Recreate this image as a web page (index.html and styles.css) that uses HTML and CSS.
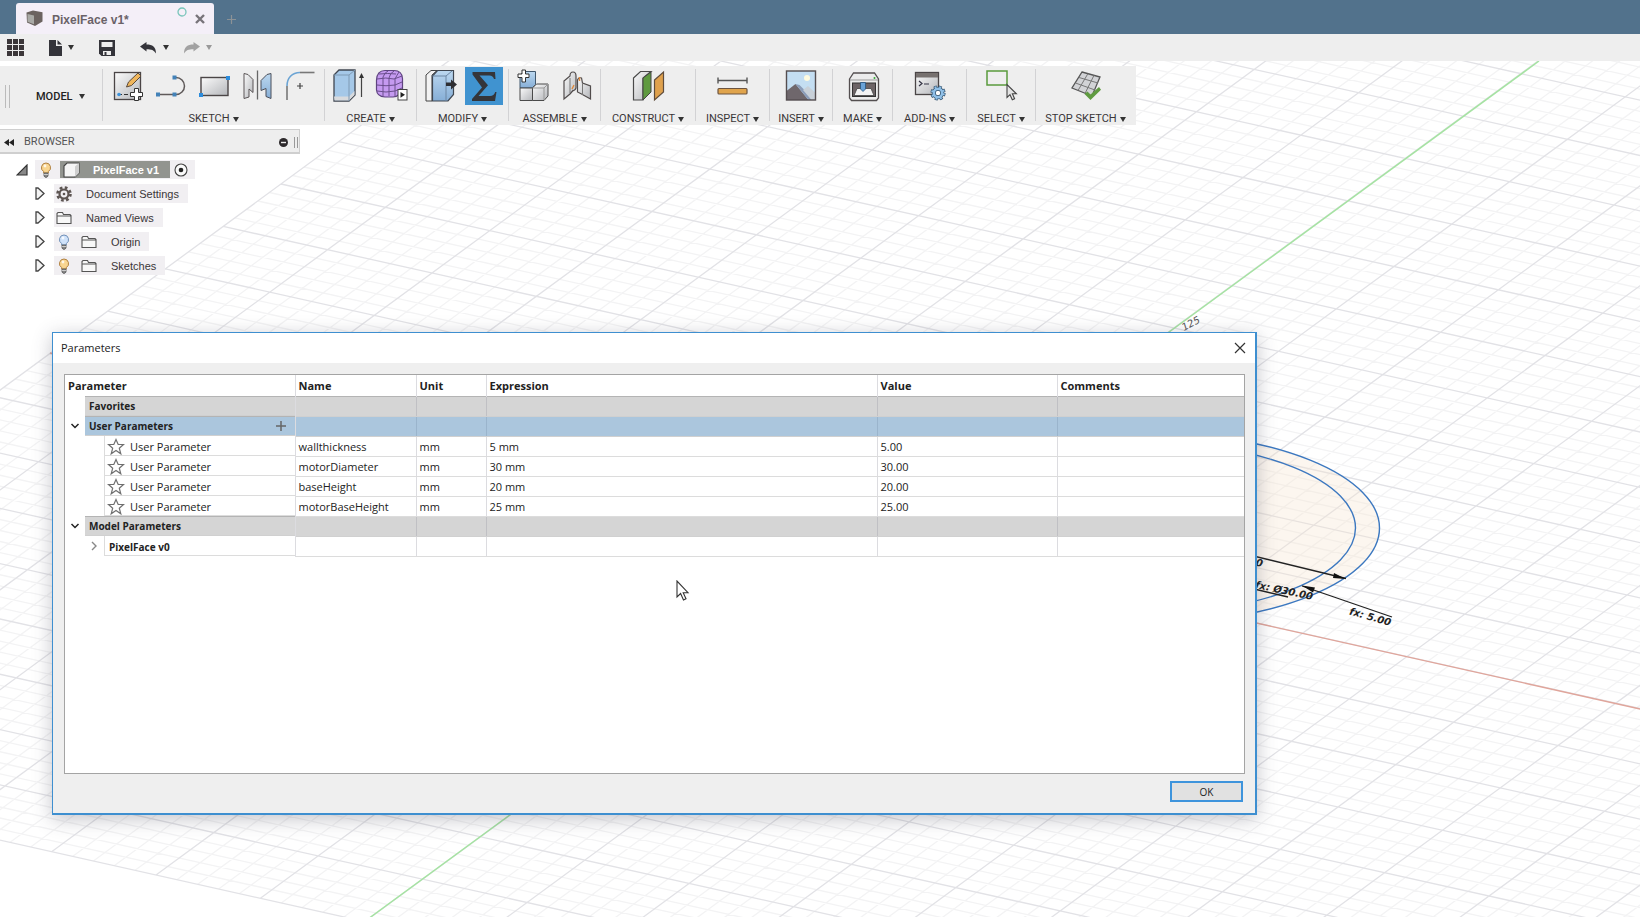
FILE: index.html
```html
<!DOCTYPE html>
<html lang="en">
<head>
<meta charset="utf-8">
<title>PixelFace v1*</title>
<link rel="stylesheet" href="styles.css">
</head>
<body>
<svg class="defs" width="0" height="0" aria-hidden="true">
  <defs>
    <linearGradient id="steel" x1="0" y1="0" x2="1" y2="1"><stop offset="0" stop-color="#fbfbfb"/><stop offset="1" stop-color="#b4b6ba"/></linearGradient>
    <linearGradient id="sky" x1="0" y1="0" x2="0" y2="1"><stop offset="0" stop-color="#bcd8f0"/><stop offset="1" stop-color="#86aed6"/></linearGradient>
    <symbol id="bulb" viewBox="0 0 12 16"><path d="M6 1a4.6 4.6 0 0 0-2.4 8.500V11h4.800V9.500A4.600 4.600 0 0 0 6 1z" stroke="currentColor"/><path d="M4 11h4v3l-1 1.200H5L4 14z" fill="#888" stroke="#555" stroke-width=".8"/><path d="M4 12.500h4" stroke="#ddd" stroke-width=".8"/><circle cx="5" cy="4" r="1.400" fill="#fff" opacity=".8"/></symbol>
    <symbol id="folder" viewBox="0 0 16 14"><path d="M1 12.500v-10l1-1h4.500l1 2H14l1 1v8z M1 5h14" fill="#f8f8f8" stroke="#555" stroke-width="1.100"/></symbol>
    <symbol id="closed" viewBox="0 0 10 13"><path d="M1 1h2l6 5.500-6 5.500H1z" fill="#f4f4f4" stroke="#444" stroke-width="1.300"/></symbol>
    <symbol id="star" viewBox="0 0 18 18"><path d="M9 1.500l2.200 5h5.300l-4.200 3.700 1.500 5.600L9 12.500l-4.800 3.300 1.500-5.600L1.500 6.500h5.300z" fill="#fff" stroke="#707070" stroke-width="1.200"/></symbol>
    <symbol id="chev" viewBox="0 0 10 10"><path d="M1.500 3L5 6.500 8.500 3" fill="none" stroke="#222" stroke-width="1.500"/></symbol>
  </defs>
</svg>

<header class="titlebar">
  <div class="tab">
    <svg class="tab-cube" width="17" height="17" viewBox="0 0 17 17"><path d="M.5 2.500L7 .500l9.500 1.800v9.200L9 16 1 12.500z" fill="#6b6360"/><path d="M1.500 4l6.500 1.500v8.800l-6.500-2.600z" fill="#a9aaa6"/></svg>
    <span class="tab-name">PixelFace v1*</span>
    <svg class="tab-ring" width="10" height="10" viewBox="0 0 10 10"><circle cx="5" cy="5" r="4" fill="none" stroke="#79c5bb" stroke-width="1.300"/></svg>
    <button class="tab-close" aria-label="Close tab"><svg width="10" height="10" viewBox="0 0 10 10"><path d="M1 1l8 8M9 1L1 9" stroke="#77747a" stroke-width="2.400"/></svg></button>
  </div>
  <button class="tab-add" aria-label="New tab"><svg width="9" height="9" viewBox="0 0 9 9"><path d="M4.500 0v9M0 4.500h9" stroke="#8c9296" stroke-width="1.200"/></svg></button>
</header>

<nav class="quick" aria-label="Quick access">
  <button aria-label="Data panel"><svg width="17" height="17" viewBox="0 0 17 17" fill="#3b3639"><path d="M0 0h5v5H0zM6 0h5v5H6zM12 0h5v5h-5zM0 6h5v5H0zM6 6h5v5H6zM12 6h5v5h-5zM0 12h5v5H0zM6 12h5v5H6zM12 12h5v5h-5z"/></svg></button>
  <button class="quick-file" aria-label="File"><svg width="13" height="16" viewBox="0 0 13 16"><path d="M0 0h7v6h6v10H0zM8.500 0L13 4.600H8.500z" fill="#34343a"/></svg><i class="caret"></i></button>
  <button class="quick-save" aria-label="Save"><svg width="16" height="16" viewBox="0 0 16 16"><path d="M0 0h16v16H2.500L0 13.500z" fill="#34343a"/><path d="M2.500 2h11v5h-11zM4 11h8v4H4z" fill="#eee"/><path d="M5.500 12h2v3h-2z" fill="#34343a"/></svg></button>
  <button class="quick-undo" aria-label="Undo"><svg width="17" height="12" viewBox="0 0 17 12"><path d="M0 4.500L6.500 0v2.600c6 0 9.500 2.400 9.500 9-2-3.600-4.500-4.400-9.500-4.400V9.500z" fill="#34343a"/></svg><i class="caret"></i></button>
  <button class="quick-redo" aria-label="Redo"><svg width="17" height="12" viewBox="0 0 17 12"><path d="M17 4.500L10.500 0v2.600c-6 0-9.500 2.400-9.500 9 2-3.600 4.500-4.400 9.500-4.400V9.500z" fill="#a2a2a2"/></svg><i class="caret"></i></button>
</nav>

<main class="workspace">
  <svg class="scene" viewBox="0 61 1640 856" preserveAspectRatio="xMinYMin slice" aria-hidden="true">
    <path id="minor" class="grid-minor"/>
    <path id="major" class="grid-major"/>
    <g fill="#f7e4cc" fill-opacity=".32" stroke="#3c78c0" stroke-width="1.400">
      <ellipse cx="1143" cy="528" rx="236.500" ry="96"/>
      <ellipse cx="1143" cy="528" rx="212.500" ry="86" fill="none"/>
    </g>
    <path d="M50 353L1656 712.500" stroke="#e0a59b" stroke-width="1.400"/>
    <path d="M370 917.500L1539 61" stroke="#a5e3a2" stroke-width="1.500"/>
    <g stroke="#222" stroke-width="1.300" fill="#111"><path d="M1200 543l146 35.500M1302 586l90 31M1250 588l38 9"/><path stroke="none" d="M1346 579l-13-1 1-5zM1302 585.500l13 2-2 5z"/></g>
    <text class="dim" text-anchor="end" transform="translate(1312 600) rotate(12)">fx: Ø30.00</text>
    <text class="dim" text-anchor="end" transform="translate(1390 626) rotate(16)">fx: 5.00</text>
    <text class="dim" text-anchor="end" transform="translate(1262 567) rotate(12)">0.00</text>
    <text class="dim dim-axis" transform="translate(1184 331) rotate(-28)">125</text>
  </svg>

  <div class="ribbon" role="toolbar" aria-label="Model tools">
    <div class="group w-model"><i class="grip"></i><button class="mode">MODEL<i class="caret"></i></button></div>
    <div class="group w-sketch">
      <div class="tools">
        <button aria-label="Create sketch"><svg viewBox="0 0 38 38"><rect x="5.500" y="5.500" width="26" height="27" fill="url(#steel)" stroke="#4a4546" stroke-width="1.300"/><path d="M9 27.500h13" stroke="#333" stroke-dasharray="4 2"/><circle cx="10" cy="27.500" r="1.800" fill="#3c93dd"/><path d="M17.500 20l2-5L29 6l3 3-9.500 9.500z" fill="#efb65c" stroke="#5b4a3a"/><path d="M25.500 21.500h4v4h4v4h-4v4h-4v-4h-4v-4h4z" fill="#fff" stroke="#333"/></svg></button>
        <button aria-label="Line"><svg viewBox="0 0 38 38"><path d="M6 27.500h18a8.500 8.500 0 0 0 0-17h-2" fill="none" stroke="#5f5a5a" stroke-width="1.500"/><path d="M4 25.500h4v4H4zM20.500 25.500h4v4h-4zM20.500 8.500h4v4h-4z" fill="#4382b8"/></svg></button>
        <button aria-label="Rectangle"><svg viewBox="0 0 38 38"><rect x="6" y="10.500" width="27" height="18" fill="url(#steel)" stroke="#4a4546" stroke-width="1.400"/><path d="M31 9h4v4h-4zM4 26h4v4H4z" fill="#2c8cdc"/></svg></button>
        <button aria-label="Mirror"><svg viewBox="0 0 38 38"><path d="M6 6.500l4 1 5 5v13l-4-3.500v8l-5 1.500z" fill="url(#steel)" stroke="#5a5556"/><path d="M19.500 3.500v29" stroke="#666" stroke-width="1.300"/><path d="M33 6.500l-4 1-6 6v10l5-2v8l5 2z" fill="url(#sky)" stroke="#4a4f5a"/></svg></button>
        <button aria-label="Fillet"><svg viewBox="0 0 38 38" fill="none" stroke-width="1.600"><path d="M6 33V19" stroke="#777"/><path d="M6 19C6 11 11 5.500 19 5.500" stroke="#6ba4d4"/><path d="M19 5.500h14.500" stroke="#777"/><path d="M19 16v6M16 19h6" stroke="#444" stroke-width="1.200"/></svg></button>
      </div>
      <button class="label">SKETCH<i class="caret"></i></button>
    </div>
    <div class="group w-pair">
      <div class="tools">
        <button aria-label="Extrude"><svg viewBox="0 0 38 38"><path d="M4 8l5-5h16v25l-6 6H4z" fill="#a5c8e8" stroke="#3f4650" stroke-width="1.300"/><path d="M4 29.500h15L24.500 24v4L19 33.500H4.500z" fill="#d8dadd"/><path d="M4 8h15l6-5M19 8v26" fill="none" stroke="#7f9ab4"/><path d="M31.500 30V9" stroke="#444" stroke-width="1.200"/><path d="M31.500 6l-2.500 5h5z" fill="#333"/></svg></button>
        <button aria-label="Create form"><svg viewBox="0 0 38 38"><path d="M3.500 13Q4 3.500 12 3.500h9q8 0 8.500 8v11Q27 29.500 20 30h-8Q4 29.500 3.500 23z" fill="#c59af0" stroke="#5f4480" stroke-width="1.200"/><path d="M4 12q9-2 17 0l8-3M4 18q9 1.500 18 0l7-3M4 24q9 2 18 0l7-3M10 29V10q2-5 5-6M16 29V11q1-5 5-7M22 29V12q2-4 4-7M6 7q9-1 17 0" fill="none" stroke="#6a4e8c"/><rect x="25" y="22.500" width="9" height="10.500" fill="#fff" stroke="#444"/><path d="M27.500 25l4.500 2.800-4.500 3z" fill="#222"/></svg></button>
      </div>
      <button class="label">CREATE<i class="caret"></i></button>
    </div>
    <div class="group w-pair">
      <div class="tools">
        <button aria-label="Press pull"><svg viewBox="0 0 38 38"><path d="M4 8l5-4.500h6L10 8v26H4z" fill="#f2f2f2" stroke="#444"/><path d="M10.500 9l5-5.500h16v24L26 34H10.500z" fill="url(#sky)" stroke="#3f4650" stroke-width="1.200"/><path d="M10.500 9H24l6-5M24 9v25" fill="none" stroke="#6c87a4"/><path d="M24 15.500h5v-3l6 5-6 5v-3.500h-5z" fill="#2e2e32"/></svg></button>
        <button class="active" aria-label="Change parameters"><svg viewBox="0 0 38 38"><path d="M7.500 5H30l.5 7H29q-1-3.500-4.500-3.500H14.500l8.500 9.800L13.500 29H25q4 0 5.200-4h1.300L30 34H7v-2l10-11.500L7.500 7.500z" fill="#34353a"/></svg></button>
      </div>
      <button class="label">MODIFY<i class="caret"></i></button>
    </div>
    <div class="group w-pair">
      <div class="tools">
        <button aria-label="New component"><svg viewBox="0 0 38 38"><path d="M6 8l4-3.500h11.500v13L18 21H6z" fill="url(#sky)" stroke="#41586e"/><path d="M6 21h12.500v12.500H6z" fill="url(#steel)" stroke="#4a4a4a"/><path d="M18.500 21l4-4H34v12l-4 4.500H18.500z" fill="url(#steel)" stroke="#4a4a4a"/><path d="M18.500 21H30l4-4M30 21v12" fill="none" stroke="#999"/><path d="M8 3h3.500v4H15v3.500h-3.500V15H8v-4.500H4V7h4z" fill="#fff" stroke="#333"/></svg></button>
        <button aria-label="Joint"><svg viewBox="0 0 38 38"><path d="M7 14l6-5q0-4 3-4t3 4v12q-1 3-3 2.500L13 27l-6 5z" fill="url(#steel)" stroke="#514c4c" stroke-width="1.200"/><path d="M13 11v15" stroke="#777"/><path d="M20.500 13q1-3 4-2l1 5 8 3v13l-9-5-4-2z" fill="url(#steel)" stroke="#514c4c" stroke-width="1.200"/><path d="M25.500 16v12" stroke="#777"/><path d="M22.500 10v4M15 22l2-4" stroke="#e08a3c" stroke-width="1.400"/></svg></button>
      </div>
      <button class="label">ASSEMBLE<i class="caret"></i></button>
    </div>
    <div class="group w-construct">
      <div class="tools"><button aria-label="Offset plane"><svg viewBox="0 0 38 38"><path d="M4.500 11l7-6.500h10.500L14 11v22H4.500z" fill="url(#steel)" stroke="#4a4a4a" stroke-width="1.200"/><path d="M14 11l8-6v20l-8 8z" fill="#5f9a40" stroke="#444"/><path d="M25.500 13l9-8v20l-9 8z" fill="#dfa14d" stroke="#5f4c3c" stroke-width="1.200"/></svg></button></div>
      <button class="label">CONSTRUCT<i class="caret"></i></button>
    </div>
    <div class="group w-mid">
      <div class="tools"><button aria-label="Measure"><svg viewBox="0 0 38 38"><path d="M4 13.500h29M4 10.500v6M33 10.500v6" stroke="#555" stroke-width="1.400"/><rect x="4" y="21.500" width="29" height="5.500" rx="1" fill="#e0a44c" stroke="#6c5440" stroke-width="1.200"/></svg></button></div>
      <button class="label">INSPECT<i class="caret"></i></button>
    </div>
    <div class="group w-insert">
      <div class="tools"><button aria-label="Decal"><svg viewBox="0 0 38 38"><rect x="4.500" y="4" width="29" height="29" fill="#c4def2"/><circle cx="25" cy="11" r="3" fill="#fffbe0"/><path d="M4.500 24l9-7 13 16h-22z" fill="#6f676c"/><path d="M13.500 17l4 1 12 12v3h-3z" fill="#8b9cb8"/><path d="M21 23l5-4 7.500 7v7h-4z" fill="#c8d0d8"/><rect x="4.500" y="4" width="29" height="29" fill="none" stroke="#554e50" stroke-width="1.400"/></svg></button></div>
      <button class="label">INSERT<i class="caret"></i></button>
    </div>
    <div class="group w-make">
      <div class="tools"><button aria-label="3D print"><svg viewBox="0 0 38 38"><path d="M5.500 12l4-6h21l4 6v19l-2 2.500H7.500l-2-2.500z" fill="#ececec" stroke="#544f50" stroke-width="1.300"/><path d="M6 13h28" stroke="#999"/><circle cx="30.500" cy="11" r="1" fill="#3a3"/><rect x="8.500" y="16" width="23" height="13.500" fill="#6d6466" stroke="#333"/><path d="M13 21.500h14l3 7H10z" fill="#f3f3f3" stroke="#444" stroke-width=".8"/><path d="M16.500 15.500h5V22l-2.500 2.500-2.500-2.500z" fill="#69a3d8" stroke="#285580" stroke-width=".8"/></svg></button></div>
      <button class="label">MAKE<i class="caret"></i></button>
    </div>
    <div class="group w-mid">
      <div class="tools"><button aria-label="Scripts and add-ins"><svg viewBox="0 0 38 38"><rect x="4.500" y="5.500" width="23" height="22" fill="url(#steel)" stroke="#4a4546" stroke-width="1.300"/><path d="M5 6h22v4.500H5z" fill="#77716f"/><path d="M8 14l3 2.500L8 19M13 17h5" fill="none" stroke="#334" stroke-width="1.200"/><circle cx="27" cy="26" r="5.700" fill="none" stroke="#33536e" stroke-width="3.800" stroke-dasharray="2.700 1.780"/><circle cx="27" cy="26" r="4.200" fill="#fff" stroke="#33536e" stroke-width="4"/><circle cx="27" cy="26" r="4.200" fill="none" stroke="#90c0e8" stroke-width="2.600"/><circle cx="27" cy="26" r="5.700" fill="none" stroke="#90c0e8" stroke-width="2.400" stroke-dasharray="1.700 2.780" stroke-dashoffset="-.5"/></svg></button></div>
      <button class="label">ADD-INS<i class="caret"></i></button>
    </div>
    <div class="group w-select">
      <div class="tools"><button aria-label="Select"><svg viewBox="0 0 38 38"><rect x="5" y="4" width="20" height="14" fill="none" stroke="#5a9a3c" stroke-width="1.500"/><path d="M25 17.500v13l3-2.800 2.300 5 2.300-1-2.200-4.900h4z" fill="#e4e4e4" stroke="#444" stroke-width="1.100"/></svg></button></div>
      <button class="label">SELECT<i class="caret"></i></button>
    </div>
    <div class="group w-stop">
      <div class="tools"><button aria-label="Stop sketch"><svg viewBox="0 0 38 38"><path d="M15 5l18 5-8 19-20-8z" fill="#d2d3d6" stroke="#555" stroke-width="1.300"/><path d="M12 10.500l19 5.500M8.500 16l19.500 7M21 6.500L11 23.500M27 8.300L18 26.500" fill="none" stroke="#777"/><path d="M17.500 27l3-2.500 3 3L32 20l2 2.800L23.500 33z" fill="#5f9a40"/></svg></button></div>
      <button class="label">STOP SKETCH<i class="caret"></i></button>
    </div>
  </div>

  <aside class="browser">
    <div class="browser-head">
      <svg width="10" height="7" viewBox="0 0 10 7"><path d="M5 0v7L0 3.500zM10 0v7L5 3.500z" fill="#222"/></svg>
      <span>BROWSER</span>
      <button class="browser-min" aria-label="Collapse"><svg width="9" height="9" viewBox="0 0 9 9"><circle cx="4.500" cy="4.500" r="4.500" fill="#2d2a2c"/><path d="M2 4.500h5" stroke="#eee" stroke-width="1.400"/></svg></button>
      <i class="browser-grip"></i>
    </div>
    <ul class="tree">
      <li class="root"><svg class="twist" width="12" height="12" viewBox="0 0 12 12"><path d="M11 1v10H1z" fill="#888" stroke="#333" stroke-width="1.200"/></svg>
        <span class="node node-root"><svg class="on" width="12" height="16"><use href="#bulb"/></svg><span class="picked"><svg width="17" height="16" viewBox="0 0 17 16"><path d="M1 4l3-3h12v10l-4 4H1z" fill="#f5f5f5" stroke="#444" stroke-width="1.100"/><path d="M12 4.500V15l4-4V1z" fill="#cfcfcf"/></svg><b>PixelFace v1</b></span><svg width="14" height="14" viewBox="0 0 14 14"><circle cx="7" cy="7" r="6" fill="#fafafa" stroke="#444" stroke-width="1.100"/><circle cx="7" cy="7" r="2.300" fill="#222"/></svg></span></li>
      <li><svg class="twist" width="10" height="13"><use href="#closed"/></svg><span class="node"><svg width="16" height="16" viewBox="0 0 16 16"><circle cx="8" cy="8" r="6.500" fill="none" stroke="#5d5552" stroke-width="2.600" stroke-dasharray="2.700 2.405"/><circle cx="8" cy="8" r="4.500" fill="none" stroke="#5d5552" stroke-width="2.200"/><circle cx="8" cy="8" r="1.300" fill="#5d5552"/></svg><span class="name">Document Settings</span></span></li>
      <li><svg class="twist" width="10" height="13"><use href="#closed"/></svg><span class="node"><svg width="16" height="14"><use href="#folder"/></svg><span class="name">Named Views</span></span></li>
      <li><svg class="twist" width="10" height="13"><use href="#closed"/></svg><span class="node"><svg class="off bulb" width="12" height="16"><use href="#bulb"/></svg><svg width="16" height="14"><use href="#folder"/></svg><span class="name">Origin</span></span></li>
      <li><svg class="twist" width="10" height="13"><use href="#closed"/></svg><span class="node"><svg class="on bulb" width="12" height="16"><use href="#bulb"/></svg><svg width="16" height="14"><use href="#folder"/></svg><span class="name">Sketches</span></span></li>
    </ul>
  </aside>

  <section class="dialog" role="dialog" aria-labelledby="dialog-title">
    <div class="dialog-title"><span id="dialog-title">Parameters</span><button class="dialog-close" aria-label="Close"><svg width="12" height="12" viewBox="0 0 12 12"><path d="M1 1l10 10M11 1L1 11" stroke="#333" stroke-width="1.200"/></svg></button></div>
    <div class="sheet">
      <table>
        <colgroup><col class="c-param"><col class="c-name"><col class="c-unit"><col class="c-expr"><col class="c-value"><col></colgroup>
        <thead><tr><th>Parameter</th><th>Name</th><th>Unit</th><th>Expression</th><th>Value</th><th>Comments</th></tr></thead>
        <tbody>
          <tr class="band"><td><div class="lead"><i class="slot"></i><span class="cell">Favorites</span></div></td><td></td><td></td><td></td><td></td><td></td></tr>
          <tr class="band chosen"><td><div class="lead"><button class="slot" aria-label="Collapse user parameters"><svg width="10" height="10"><use href="#chev"/></svg></button><span class="cell">User Parameters<button class="add" aria-label="Add user parameter"><svg width="10" height="10" viewBox="0 0 10 10"><path d="M5 0v10M0 5h10" stroke="#666" stroke-width="1.500"/></svg></button></span></div></td><td></td><td></td><td></td><td></td><td></td></tr>
          <tr class="item"><td><div class="lead"><span class="cell"><svg width="18" height="18"><use href="#star"/></svg>User Parameter</span></div></td><td>wallthickness</td><td>mm</td><td>5 mm</td><td>5.00</td><td></td></tr>
          <tr class="item"><td><div class="lead"><span class="cell"><svg width="18" height="18"><use href="#star"/></svg>User Parameter</span></div></td><td>motorDiameter</td><td>mm</td><td>30 mm</td><td>30.00</td><td></td></tr>
          <tr class="item"><td><div class="lead"><span class="cell"><svg width="18" height="18"><use href="#star"/></svg>User Parameter</span></div></td><td>baseHeight</td><td>mm</td><td>20 mm</td><td>20.00</td><td></td></tr>
          <tr class="item"><td><div class="lead"><span class="cell"><svg width="18" height="18"><use href="#star"/></svg>User Parameter</span></div></td><td>motorBaseHeight</td><td>mm</td><td>25 mm</td><td>25.00</td><td></td></tr>
          <tr class="band"><td><div class="lead"><button class="slot" aria-label="Collapse model parameters"><svg width="10" height="10"><use href="#chev"/></svg></button><span class="cell">Model Parameters</span></div></td><td></td><td></td><td></td><td></td><td></td></tr>
          <tr class="part"><td><div class="lead"><button class="slot" aria-label="Expand PixelFace v0"><svg width="10" height="10" viewBox="0 0 10 10"><path d="M3 1l4 4-4 4" fill="none" stroke="#888" stroke-width="1.400"/></svg></button><span class="cell">PixelFace v0</span></div></td><td></td><td></td><td></td><td></td><td></td></tr>
        </tbody>
      </table>
    </div>
    <div class="dialog-foot"><button class="ok">OK</button></div>
  </section>

  <svg class="pointer" width="14" height="21" viewBox="0 0 14 21" aria-hidden="true"><path d="M1 1v16l3.600-3.500L7.500 20l2.500-1.200-2.800-6.100H12z" fill="#fff" stroke="#333" stroke-width="1.100"/></svg>
</main>
<script src="scene.js"></script>
</body>
</html>
```

FILE: styles.css
```css
* { box-sizing: border-box; }

body {
  margin: 0;
  min-height: 100vh;
  display: flex;
  flex-direction: column;
  overflow: hidden;
  background: #fff;
  color: #3a3638;
  font: 11px/16px "Liberation Sans", Arial, sans-serif;
}

button {
  display: inline-flex;
  align-items: center;
  justify-content: center;
  padding: 0;
  border: 0;
  background: none;
  color: inherit;
  font: inherit;
}

svg { display: block; flex: none; }
.defs { position: absolute; }

.caret {
  border: 3px solid transparent;
  border-top: 5px solid #333;
  border-bottom: 0;
}

/* Title bar */
.titlebar {
  display: flex;
  align-items: center;
  height: 34px;
  padding-left: 16px;
  background: #52728c;
}
.tab {
  display: flex;
  align-items: center;
  align-self: flex-end;
  width: 198px;
  height: 31px;
  padding: 0 9px 0 10px;
  border-radius: 3px 3px 0 0;
  background: #f4eff8;
}
.tab-name {
  margin-left: 9px;
  padding-top: 2px;
  color: #6a6268;
  font-size: 12px;
  font-weight: bold;
}
.tab-ring { margin-left: auto; margin-bottom: 13px; }
.tab-close { margin-left: 8px; }
.tab-add { margin: 4px 0 0 13px; }

/* Quick access bar */
.quick {
  display: flex;
  align-items: center;
  height: 27px;
  padding-left: 7px;
  background: #eee;
}
.quick button { gap: 6px; }
.quick-file { margin-left: 25px; }
.quick-save { margin-left: 25px; }
.quick-undo { margin-left: 25px; }
.quick-redo { margin-left: 14px; }
.quick-redo .caret { border-top-color: #999; }

/* Canvas */
.workspace {
  position: relative;
  flex: 1;
  padding-top: 5px;
  overflow: hidden;
}
.scene {
  position: absolute;
  inset: 0;
  width: 100%;
  height: 100%;
}
.grid-minor { fill: none; stroke: #f3f3f4; stroke-width: 1.3; }
.grid-major { fill: none; stroke: #e2e2e6; stroke-width: 1.3; }
.dim { font: italic bold 10px "DejaVu Sans", sans-serif; fill: #222; }
.dim-axis { font-weight: normal; fill: #555; }

/* Ribbon */
.ribbon {
  position: relative;
  display: flex;
  width: max-content;
  height: 59px;
  background: #eee;
  font-family: Roboto, Arial, sans-serif;
}
.group {
  position: relative;
  display: flex;
  flex-direction: column;
  align-items: center;
  padding: 1px 1px 0 0;
  background: linear-gradient(#d2d2d4, #d2d2d4) right 3px / 1px 52px no-repeat;
}
.group:last-child { background: none; }
.w-model { flex-direction: row; width: 103px; padding: 2px 0 0 5px; }
.w-sketch { width: 222px; }
.w-pair { width: 92px; }
.w-construct { width: 95px; }
.w-mid { width: 74px; }
.w-insert { width: 63px; }
.w-make { width: 60px; }
.w-select { width: 69px; }
.w-stop { width: 100px; }
.grip {
  width: 5px;
  height: 23px;
  border: solid #bbb;
  border-width: 0 1px;
}
.mode { gap: 6px; margin-left: 26px; font-weight: 500; color: #222; }
.tools { display: flex; gap: 5px; height: 38px; }
.tools button { width: 38px; height: 38px; }
.tools svg { width: 38px; height: 38px; }
.active { background: #4093d0; }
.label { gap: 3px; margin-top: 6px; white-space: nowrap; }

/* Browser */
.browser { position: relative; width: 300px; margin-top: 4px; }
.browser-head {
  display: flex;
  align-items: center;
  height: 25px;
  padding: 2px 1px 0 4px;
  border: solid #cfcfcf;
  border-width: 1px 1px 2px 0;
  background: #eee;
  font-family: Roboto, Arial, sans-serif;
  color: #555;
}
.browser-head span { margin-left: 10px; }
.browser-min { margin-left: auto; }
.browser-grip { width: 4px; height: 11px; margin-left: 6px; border: solid #999; border-width: 0 1px; }
.tree {
  display: flex;
  flex-direction: column;
  gap: 5px;
  margin: 0;
  padding: 6px 0 0;
  list-style: none;
}
.tree li { display: flex; align-items: center; height: 19px; padding-left: 35px; gap: 9px; }
.tree .root { padding-left: 16px; gap: 7px; }
.node { display: flex; align-items: center; height: 19px; padding: 0 9px 0 2px; background: #f1eff2; }
.node-root { padding: 0 7px 0 5px; }
.name { margin-left: 14px; }
.bulb { margin: 0 11px 0 2px; }
.on { fill: #f9d590; color: #b08040; }
.off { fill: #cfe2fa; color: #7090b8; }
.picked {
  display: flex;
  align-items: center;
  gap: 13px;
  height: 17px;
  margin: 0 4px 0 8px;
  padding: 0 11px 0 3px;
  background: #92948f;
  color: #fff;
}

/* Parameters dialog */
.dialog {
  position: absolute;
  inset: 271px 383px 102px 52px;
  display: flex;
  flex-direction: column;
  border: 1px solid #3e8fd0;
  border-width: 1px 2px 2px 1px;
  background: #efefef;
  box-shadow: 0 4px 18px rgba(60, 60, 80, .3);
  color: #222;
  font-family: "Open Sans", "Noto Sans", sans-serif;
}
.dialog-title {
  display: flex;
  align-items: center;
  justify-content: space-between;
  height: 30px;
  padding: 0 9px 1px 8px;
  background: #fff;
}
.sheet {
  flex: 1;
  margin: 11px 10px 0 11px;
  border: 1px solid #a4a4a4;
  background: #fff;
}
.dialog-foot { display: flex; justify-content: flex-end; padding: 7px 12px 11px; }
.ok {
  width: 73px;
  height: 21px;
  border: 2px solid #3e94dc;
  background: #e1e1e1;
  font-size: 10px;
}

table { width: 100%; border-collapse: collapse; table-layout: fixed; }
.c-param { width: 230px; }
.c-name { width: 121px; }
.c-unit { width: 70px; }
.c-expr { width: 391px; }
.c-value { width: 180px; }
th, td { height: 20px; padding: 1px 3px 0; line-height: 18px; text-align: left; border-right: 1px solid #dcdce0; white-space: nowrap; }
th { height: 21px; }
th:last-child, td:last-child { border-right: 0; }
td { border-bottom: 1px solid #dcdcdc; }
td:first-child { padding: 0; border-bottom: 0; }
.lead { display: flex; height: 20px; }
.slot { width: 20px; }
.cell { display: flex; flex: 1; align-items: center; border-bottom: 1px solid #dcdcdc; }
.band td:not(:first-child), .band .cell {
  background: #d5d5d5;
  border-top: 1px solid #b4b4b4;
  border-bottom-color: #d0d0d0;
  border-right-color: #c0c0c4;
}
.band.chosen td:not(:first-child), .band.chosen .cell {
  background: #abc6dd;
  border-right-color: #9ab4cc;
}
.band .cell { padding: 0 9px 0 4px; justify-content: space-between; font-size: 10px; font-weight: bold; }
.item .lead { padding-left: 39px; }
.item .cell { gap: 5px; padding: 2px 0 0 2px; border-left: 1px solid #dcdcdc; }
.part .lead { padding-left: 19px; }
.part .cell { padding: 2px 0 0 4px; border-left: 1px solid #dcdcdc; font-size: 10px; font-weight: bold; }

.pointer { position: absolute; left: 676px; top: 519px; }
```

FILE: scene.js
```js
// Ground plane: origin, and the screen vector of one major square on each axis.
const origin = [885, 540];
const xAxis = [104.4, 23.3];
const yAxis = [57.8, -42.4];
const range = { x: [-8, 14], y: [-9, 16] };
const steps = 5;

function point(a, b) {
  const x = origin[0] + a * xAxis[0] + b * yAxis[0];
  const y = origin[1] + a * xAxis[1] + b * yAxis[1];
  return x.toFixed(1) + ' ' + y.toFixed(1);
}

const lines = { major: '', minor: '' };
for (let i = range.x[0] * steps; i <= range.x[1] * steps; i++) {
  const kind = i % steps ? 'minor' : 'major';
  lines[kind] += `M${point(i / steps, range.y[0])}L${point(i / steps, range.y[1])}`;
}
for (let i = range.y[0] * steps; i <= range.y[1] * steps; i++) {
  const kind = i % steps ? 'minor' : 'major';
  lines[kind] += `M${point(range.x[0], i / steps)}L${point(range.x[1], i / steps)}`;
}
document.getElementById('minor').setAttribute('d', lines.minor);
document.getElementById('major').setAttribute('d', lines.major);
```
